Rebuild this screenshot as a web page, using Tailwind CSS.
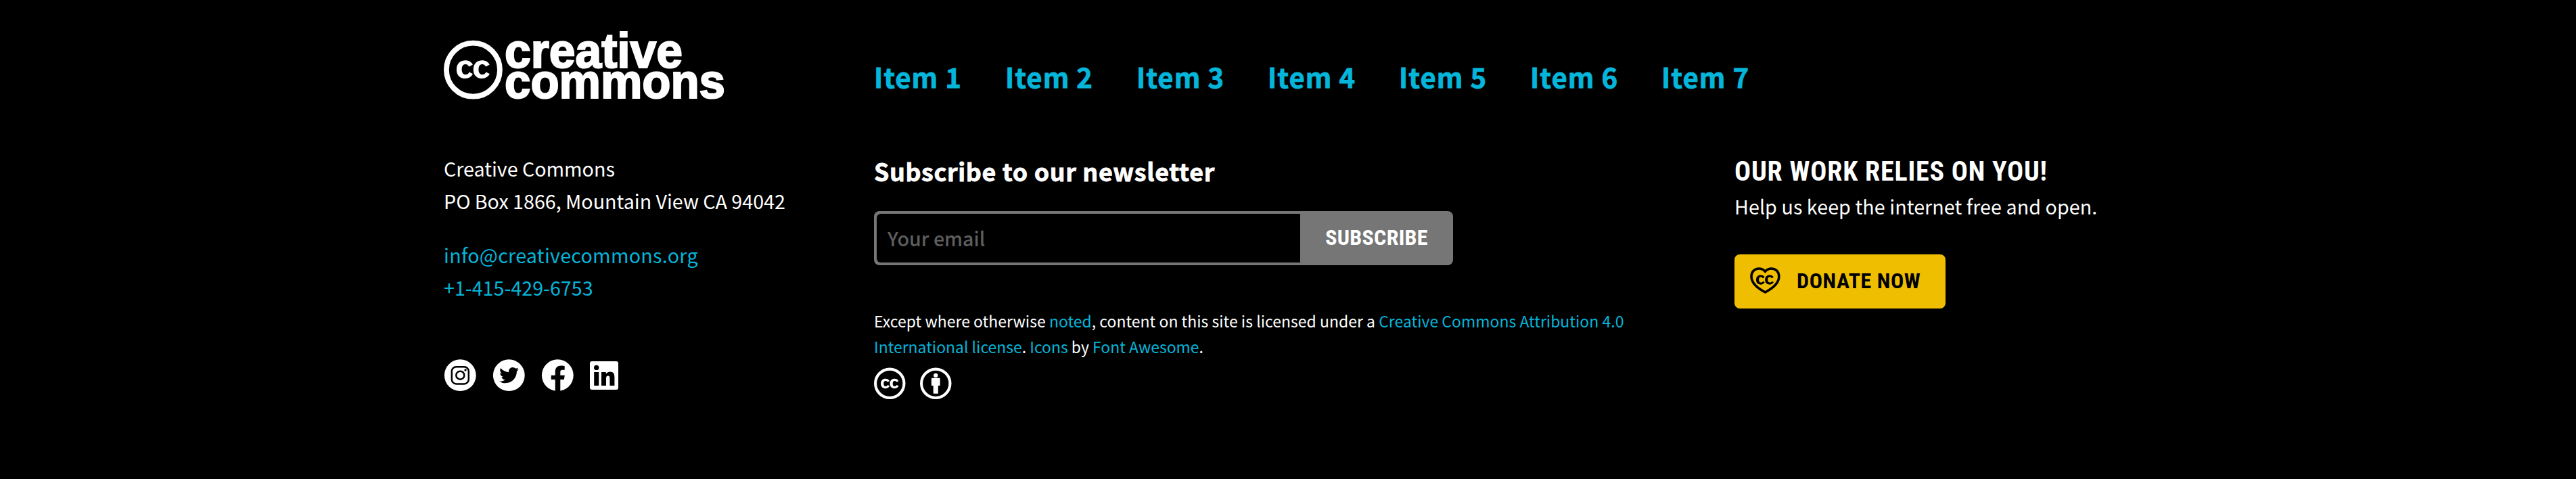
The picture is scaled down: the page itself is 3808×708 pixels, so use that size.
<!DOCTYPE html>
<html lang="en">
<head>
<meta charset="utf-8">
<title>Creative Commons</title>
<script src="https://cdn.jsdelivr.net/npm/@tailwindcss/browser@4"></script>
</head>
<body class="bg-black">
<svg class="hidden">
  <defs>
    <path id="cc" d="M245.83 214.87l-33.22 17.28c-9.43-19.58-25.24-19.93-27.46-19.93-22.13 0-33.22 14.61-33.22 43.84 0 23.57 9.21 43.84 33.22 43.84 14.47 0 24.65-7.09 30.57-21.26l30.55 15.5c-6.17 11.51-25.69 38.98-65.1 38.98-22.6 0-73.96-10.32-73.96-77.05 0-58.69 43-77.06 72.63-77.06 30.72-.01 52.7 11.95 65.99 35.86zm143.05 0l-32.78 17.28c-9.5-19.77-25.72-19.93-27.9-19.93-22.14 0-33.22 14.61-33.22 43.84 0 23.55 9.23 43.84 33.22 43.84 14.45 0 24.65-7.09 30.54-21.26l31 15.5c-2.1 3.75-21.39 38.98-65.09 38.98-22.69 0-73.96-9.87-73.96-77.05 0-58.67 42.97-77.06 72.63-77.06 30.71-.01 52.58 11.95 65.56 35.86z"/>
  </defs>
</svg>
<footer class="flex h-[708px] w-full bg-black pl-[656px] text-[28.65px] leading-[48px] whitespace-nowrap text-white font-['Noto_Sans_CJK_SC','Open_Sans',sans-serif]">
  <section class="flex w-[636px] shrink-0 flex-col pt-11">
    <svg class="h-[108px] w-[420px]" viewBox="0 0 420 108" fill="#fff">
      <circle cx="43.4" cy="59.2" r="39.5" fill="none" stroke="#fff" stroke-width="7.8"/>
      <use href="#cc" transform="translate(0.3 14.2) scale(.1735)"/>
      <g font-family="Liberation Sans" font-weight="700" font-size="72" stroke="#fff" stroke-width="2.2">
        <text x="90" y="56" textLength="263" lengthAdjust="spacingAndGlyphs">creative</text>
        <text x="90" y="101" textLength="326" lengthAdjust="spacingAndGlyphs">commons</text>
      </g>
    </svg>
    <address class="mt-[73px] flex flex-col not-italic">
      <span>Creative Commons</span>
      <span>PO Box 1866, Mountain View CA 94042</span>
      <a class="mt-8 tracking-[0.28px] text-[#05b5da]">info@creativecommons.org</a>
      <a class="text-[#05b5da]">+1-415-429-6753</a>
    </address>
    <div class="mt-[82px] flex gap-6">
      <svg class="size-12" viewBox="0 0 48 48">
        <circle cx="24.3" cy="23.7" r="23.4" fill="#fff"/>
        <g fill="none" stroke="#000" stroke-width="2.5"><rect x="11.8" y="11.2" width="25" height="25.2" rx="6.6"/><circle cx="24.3" cy="23.7" r="6"/></g>
        <circle cx="32" cy="16" r="1.7"/>
      </svg>
      <svg class="size-12" viewBox="0 0 48 48">
        <circle cx="24.3" cy="23.7" r="23.4" fill="#fff"/>
        <path transform="translate(10.1 9.3) scale(.056)" d="M459.37 151.716c.325 4.548.325 9.097.325 13.645 0 138.72-105.583 298.558-298.558 298.558-59.452 0-114.68-17.219-161.137-47.106 8.447.974 16.568 1.299 25.34 1.299 49.055 0 94.213-16.568 130.274-44.832-46.132-.975-84.792-31.188-98.112-72.772 6.498.974 12.995 1.624 19.818 1.624 9.421 0 18.843-1.3 27.614-3.573-48.081-9.747-84.143-51.98-84.143-102.985v-1.299c13.969 7.797 30.214 12.67 47.431 13.319-28.264-18.843-46.781-51.005-46.781-87.391 0-19.492 5.197-37.36 14.294-52.954 51.655 63.675 129.3 105.258 216.365 109.807-1.624-7.797-2.599-15.918-2.599-24.04 0-57.828 46.782-104.934 104.934-104.934 30.213 0 57.502 12.67 76.67 33.137 23.715-4.548 46.456-13.32 66.599-25.34-7.798 24.366-24.366 44.833-46.132 57.827 21.117-2.273 41.584-8.122 60.426-16.243-14.292 20.791-32.161 39.308-52.628 54.253z"/>
      </svg>
      <svg class="size-12" viewBox="0 0 48 48">
        <circle cx="24.3" cy="23.7" r="23.4" fill="#fff"/>
        <path d="M20.7 48V30H14.7V23.7h6V18.5c0-5.8 3.4-9 8.7-9 2.5 0 4.9.4 5.3.5v5.7h-3c-2.9 0-3.4 1.6-3.4 3.4v4.6h6.5l-1 6.3h-5.5V48z"/>
      </svg>
      <svg class="size-12" viewBox="0 0 48 48">
        <rect y="3" width="42" height="42" rx="3" fill="#fff"/>
        <circle cx="9.7" cy="12.4" r="3.7"/>
        <path d="M6.2 19h7v20h-7zM17 19h6.8v2.7c1-1.8 3.3-3.2 6.3-3.2 5.4 0 6.3 3.8 6.3 8.5v12h-7V28.6c0-2.5-.2-4.2-2.6-4.2s-2.8 1.9-2.8 4.2V39h-7z"/>
      </svg>
    </div>
  </section>

  <section class="flex w-[1272px] shrink-0 flex-col pt-[83px]">
    <nav class="flex gap-16 text-[40.1px] leading-[60px] font-bold tracking-[1px] text-[#05b5da] [-webkit-text-stroke:0.8px]">
      <a>Item 1</a><a>Item 2</a><a>Item 3</a><a>Item 4</a><a>Item 5</a><a>Item 6</a><a>Item 7</a>
    </nav>
    <h2 class="mt-[83px] text-[35.8px] leading-[52px] font-bold tracking-[0.67px] [-webkit-text-stroke:0.8px]">Subscribe to our newsletter</h2>
    <form class="mt-[34px] flex h-20 w-[856px] overflow-hidden rounded-lg bg-[#767676]">
      <div class="my-1 ml-1 flex w-[626px] items-center rounded-l-md bg-black pl-4 font-medium text-[#5e5e5e]">Your email</div>
      <button type="button" class="flex-1 pb-0.5 text-center font-['Roboto'] text-[32px] font-bold tracking-[0.3px] [font-stretch:75%]">SUBSCRIBE</button>
    </form>
    <p class="mt-[63px] w-[1130px] text-[22.95px] leading-[38px]"><span class="tracking-[0.035px]">Except where otherwise <a class="text-[#05b5da]">noted</a>, content on this site is licensed under a <a class="text-[#05b5da]">Creative Commons Attribution 4.0</a></span><br><a class="text-[#05b5da]">International license</a>. <a class="text-[#05b5da]">Icons</a> by <a class="text-[#05b5da]">Font Awesome</a>.</p>
    <div class="mt-3 flex gap-[21.5px]">
      <svg class="h-12 w-[46.5px]" viewBox="0 0 496 512" fill="#fff">
        <circle cx="248" cy="254" r="226" fill="none" stroke="#fff" stroke-width="44"/>
        <use href="#cc"/>
      </svg>
      <svg class="h-12 w-[46.5px]" viewBox="0 0 496 512" fill="#fff">
        <circle cx="248" cy="254" r="226" fill="none" stroke="#fff" stroke-width="44"/>
        <circle cx="248" cy="126" r="34"/>
        <path d="M192 167h112a12 12 0 0 1 12 12v109h-30v124h-76V288h-30V179a12 12 0 0 1 12-12z"/>
      </svg>
    </div>
  </section>

  <section class="flex flex-col items-start pt-[230px]">
    <h2 class="font-['Roboto'] text-[40px] font-bold tracking-[0.8px] [font-stretch:75%]">OUR WORK RELIES ON YOU!</h2>
    <p class="mt-[3px] tracking-[0.08px]">Help us keep the internet free and open.</p>
    <a class="mt-[47px] flex h-20 w-[312px] items-center rounded-lg bg-[#efbe01] pl-[23px] font-['Roboto'] text-[32px] font-bold tracking-[0.55px] text-black [font-stretch:75%]">
      <svg class="mr-[23px] -mt-[3px] h-10 w-[46px]" viewBox="0 0 46 40">
        <path fill="none" stroke="#000" stroke-width="3.6" d="M22.4 6.2C19.7 3.2 16.7 2 13.2 2C6.5 2 2 7 2 13.8C2 22.5 10 30.5 22.4 37C34.8 30.5 42.8 22.5 42.8 13.8C42.8 7 38.3 2 31.6 2C28.1 2 25.1 3.2 22.4 6.2z"/>
        <use href="#cc" transform="translate(-.9 -5) scale(.092)"/>
      </svg>
      <span class="pb-0.5">DONATE NOW</span>
    </a>
  </section>
</footer>
</body>
</html>
